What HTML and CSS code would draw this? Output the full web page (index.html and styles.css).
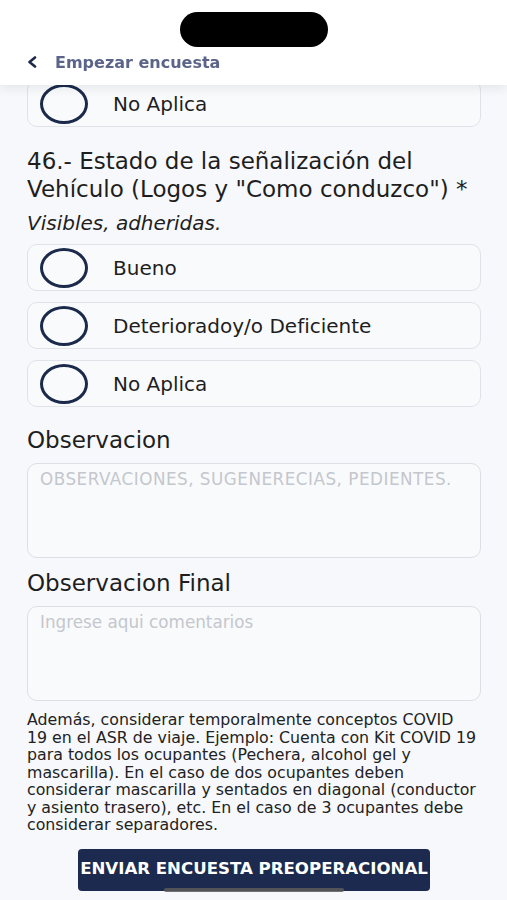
FILE: index.html
```html
<!DOCTYPE html>
<html lang="es">
<head>
    <meta charset="UTF-8">
    <meta name="viewport" content="width=device-width, initial-scale=1.0">
    <title>Empezar encuesta</title>
    <link rel="stylesheet" href="styles.css">
</head>
<body>
    <!-- barra superior fija -->
    <header class="topbar">
        <div class="island"></div>
        <a class="back" href="#">
            <svg width="10" height="12" viewBox="0 0 10 12">
                <polyline points="8,1.5 2.5,6 8,10.5" fill="none" stroke="#1e2a4a" stroke-width="2.6" stroke-linecap="round" stroke-linejoin="round"/>
            </svg>
            <span>Empezar encuesta</span>
        </a>
    </header>

    <main class="form">
        <!-- opcion de la pregunta anterior -->
        <label class="option"><span class="radio"></span><span>No Aplica</span></label>

        <section class="question">
            <h2 class="q-title">46.- Estado de la señalización del Vehículo (Logos y "Como conduzco") *</h2>
            <p class="hint">Visibles, adheridas.</p>
            <div class="options">
                <label class="option"><span class="radio"></span><span>Bueno</span></label>
                <label class="option"><span class="radio"></span><span>Deterioradoy/o Deficiente</span></label>
                <label class="option"><span class="radio"></span><span>No Aplica</span></label>
            </div>
        </section>

        <h2 class="label first">Observacion</h2>
        <textarea class="field caps" placeholder="OBSERVACIONES, SUGENERECIAS, PEDIENTES."></textarea>

        <h2 class="label">Observacion Final</h2>
        <textarea class="field" placeholder="Ingrese aqui comentarios"></textarea>

        <p class="note">Además, considerar temporalmente conceptos COVID 19 en el ASR de viaje. Ejemplo: Cuenta con Kit COVID 19 para todos los ocupantes (Pechera, alcohol gel y mascarilla). En el caso de dos ocupantes deben considerar mascarilla y sentados en diagonal (conductor y asiento trasero), etc. En el caso de 3 ocupantes debe considerar separadores.</p>

        <button class="send">ENVIAR ENCUESTA PREOPERACIONAL</button>
    </main>

    <div class="home-bar"></div>
</body>
</html>
```

FILE: styles.css
```css
body {
    margin: 0;
    height: 900px;
    overflow: hidden;
    background-color: #f6f8fb;
    font-family: "DejaVu Sans", sans-serif;
    color: #1e1e1e;
}

/* barra superior */
.topbar {
    position: fixed;
    top: 0;
    left: 0;
    right: 0;
    height: 85px;
    background-color: #ffffff;
    box-shadow: 0 4px 10px rgba(0, 0, 0, 0.07);
    z-index: 10;
}
.island {
    width: 148px;
    height: 35px;
    margin: 12px auto 0;
    border-radius: 18px;
    background-color: #000;
}
.back {
    display: flex;
    align-items: center;
    gap: 18px;
    height: 30px;
    padding-left: 27px;
    text-decoration: none;
    color: #5c6489;
    font-size: 16px;
    font-weight: bold;
}
.back svg {
    display: block;
}

/* formulario */
.form {
    padding: 80px 26px 0 27px;
}
.option {
    display: flex;
    align-items: center;
    gap: 25px;
    height: 47px;
    box-sizing: border-box;
    padding-left: 12px;
    border: 1px solid #dfe2e8;
    border-radius: 10px;
    background-color: #f9fafc;
    font-size: 20px;
}
.radio {
    width: 48px;
    height: 40px;
    box-sizing: border-box;
    border: 3px solid #1b2a4a;
    border-radius: 50%;
    flex-shrink: 0;
}
.q-title {
    margin: 20px 0 0;
    font-size: 23px;
    line-height: 28px;
    font-weight: normal;
}
.hint {
    margin: 8px 0 0;
    font-size: 20px;
    line-height: 24px;
    font-style: italic;
}
.options {
    display: flex;
    flex-direction: column;
    gap: 11px;
    margin-top: 9px;
}
.label {
    margin: 11px 0 0;
    font-size: 23px;
    line-height: 28px;
    font-weight: normal;
}
.label.first {
    margin-top: 19px;
}
.field {
    display: block;
    width: 100%;
    height: 95px;
    box-sizing: border-box;
    margin-top: 9px;
    padding: 5px 12px;
    border: 1px solid #dcdfe5;
    border-radius: 10px;
    background-color: #f9fafc;
    font-family: "DejaVu Sans", sans-serif;
    font-size: 16.8px;
    line-height: 20px;
    resize: none;
}
.field.caps {
    letter-spacing: 0.5px;
}
.field::placeholder {
    color: #c4c7cd;
}
.note {
    margin: 10px 3px 0 0;
    font-size: 15.8px;
    line-height: 17.5px;
    color: #222;
}
.send {
    display: block;
    width: 352px;
    height: 42px;
    margin: 15px auto 0;
    padding: 0 0 3px;
    border: none;
    border-radius: 4px;
    background-color: #1b2a4e;
    color: #fff;
    font-family: "DejaVu Sans", sans-serif;
    font-size: 16.6px;
    font-weight: bold;
    white-space: nowrap;
}

/* indicador inicio */
.home-bar {
    position: fixed;
    left: 164px;
    bottom: 8px;
    width: 180px;
    height: 4px;
    border-radius: 2px;
    background-color: rgba(90, 90, 90, 0.85);
}
```
